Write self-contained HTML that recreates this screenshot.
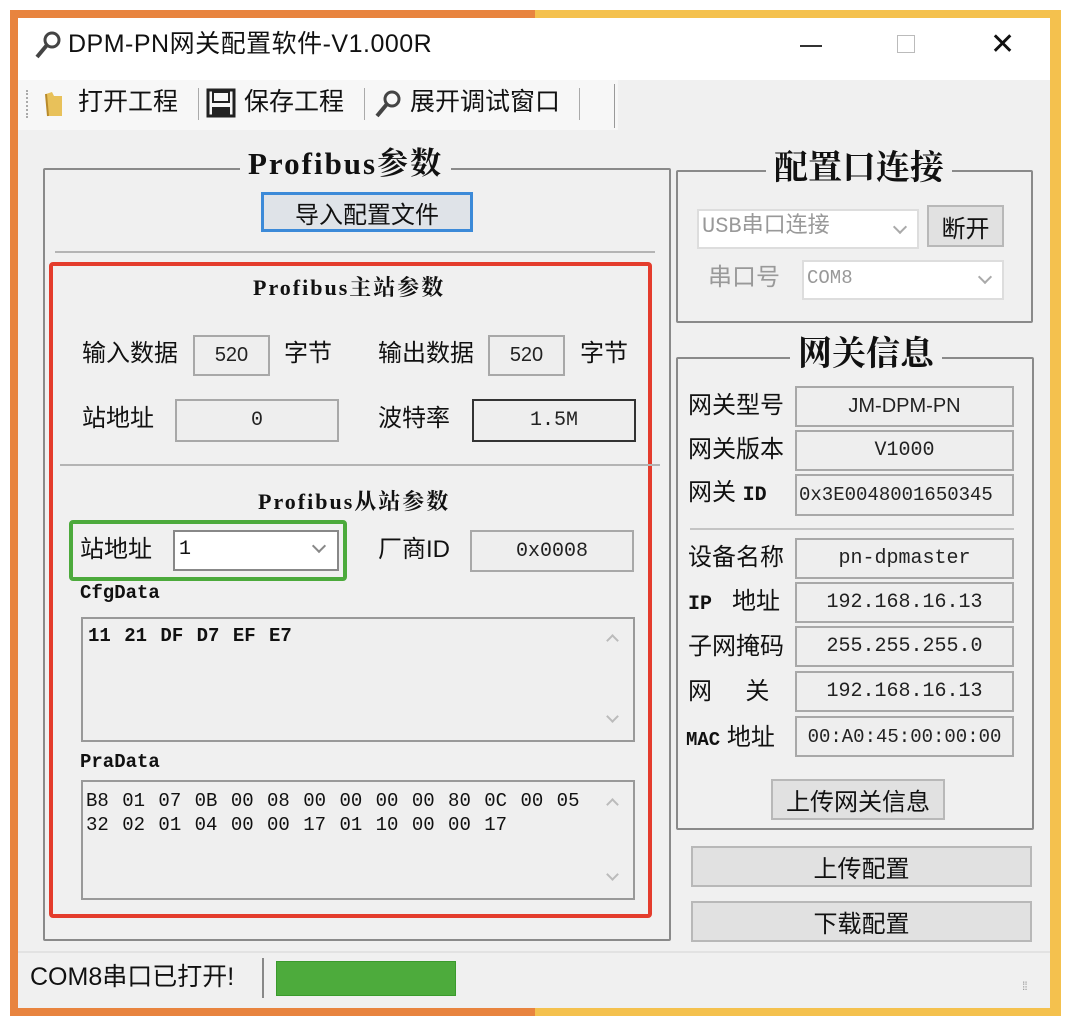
<!DOCTYPE html>
<html><head><meta charset="utf-8"><style>
*{margin:0;padding:0;box-sizing:border-box}
body{width:1069px;height:1035px;background:#fff;position:relative;overflow:hidden;font-family:"Liberation Sans","Noto Sans CJK SC",sans-serif;color:#111}
.a{position:absolute}
.t{position:absolute;white-space:nowrap;font-size:23px;line-height:1}
.box{position:absolute;border:2px solid #a8a8a8;background:#eeeeee;font-family:"Liberation Mono","Noto Sans CJK SC",monospace;font-size:20px;display:flex;align-items:center;justify-content:center;color:#222}
.grp{position:absolute;border:2px solid #8a8a8a;border-radius:2px}
.gt{position:absolute;background:#f0f0f0;font-weight:bold;white-space:nowrap;padding:0 8px;line-height:1;font-family:"Liberation Serif","Noto Serif CJK SC",serif}
.btn{position:absolute;border:2px solid #b8b8b8;background:#e1e1e1;display:flex;align-items:center;justify-content:center;font-size:23px}
.mono{font-family:"Liberation Mono","Noto Sans CJK SC",monospace}
.chev{position:absolute;width:10px;height:10px;border-right:2px solid #888;border-bottom:2px solid #888;transform:rotate(45deg)}
.chu{position:absolute;width:9px;height:9px;border-left:2px solid #bbb;border-top:2px solid #bbb;transform:rotate(45deg)}
.chd{position:absolute;width:9px;height:9px;border-right:2px solid #bbb;border-bottom:2px solid #bbb;transform:rotate(45deg)}
</style></head><body>
<div class="a" style="left:10px;top:10px;width:525px;height:1006px;background:#e8843f"></div>
<div class="a" style="left:535px;top:10px;width:526px;height:1006px;background:#f4c14e"></div>
<div class="a" style="left:18px;top:18px;width:1032px;height:990px;background:#f0f0f0"></div>
<div class="a" style="left:18px;top:18px;width:1032px;height:62px;background:#fff"></div>
<div class="a" style="left:18px;top:80px;width:600px;height:50px;background:#f7f7f7"></div>
<svg class="a" style="left:32px;top:30px" width="34" height="30" viewBox="0 0 34 30"><circle cx="20" cy="10" r="7" fill="none" stroke="#444" stroke-width="3"/><path d="M15 15 L5 27" stroke="#444" stroke-width="4"/></svg>
<div class="t" style="left:68px;top:32px;font-size:25px;letter-spacing:0.5px">DPM-PN网关配置软件-V1.000R</div>
<div class="a" style="left:800px;top:45px;width:22px;height:2px;background:#333"></div>
<div class="a" style="left:897px;top:35px;width:18px;height:18px;border:1px solid #bbb"></div>
<div class="t" style="left:990px;top:30px;font-size:30px;font-weight:300">✕</div>
<div class="a" style="left:26px;top:90px;width:2px;height:28px;border-left:2px dotted #aaa"></div>
<svg class="a" style="left:42px;top:88px" width="24" height="30"><path d="M4 6 L10 4 L12 8 L20 8 L20 28 L6 28 Z" fill="#e8c15a"/><path d="M4 6 L6 28" stroke="#b88a2a" stroke-width="2"/></svg>
<div class="t" style="left:78px;top:90px;font-size:25px">打开工程</div>
<div class="a" style="left:198px;top:88px;width:1px;height:32px;background:#aaa"></div>
<svg class="a" style="left:206px;top:88px" width="30" height="30"><rect x="2" y="2" width="26" height="26" fill="none" stroke="#222" stroke-width="3"/><rect x="7" y="4" width="16" height="10" fill="none" stroke="#222" stroke-width="2"/><rect x="6" y="19" width="18" height="8" fill="#222"/></svg>
<div class="t" style="left:244px;top:90px;font-size:25px">保存工程</div>
<div class="a" style="left:364px;top:88px;width:1px;height:32px;background:#aaa"></div>
<svg class="a" style="left:372px;top:88px" width="34" height="32" viewBox="0 0 34 30"><circle cx="20" cy="10" r="7" fill="none" stroke="#444" stroke-width="3"/><path d="M15 15 L5 27" stroke="#444" stroke-width="4"/></svg>
<div class="t" style="left:410px;top:90px;font-size:25px">展开调试窗口</div>
<div class="a" style="left:579px;top:88px;width:1px;height:32px;background:#aaa"></div>
<div class="a" style="left:614px;top:84px;width:1px;height:44px;background:#999"></div>

<div class="grp" style="left:43px;top:168px;width:628px;height:773px"></div>
<div class="gt" style="left:240px;top:148px;font-size:31px;letter-spacing:2px">Profibus参数</div>
<div class="btn" style="left:261px;top:192px;width:212px;height:40px;border:3px solid #3c8ad8;background:#dfe3e8;font-size:24px">导入配置文件</div>
<div class="a" style="left:55px;top:251px;width:600px;height:2px;background:#b4b4b4"></div>
<div class="a" style="left:49px;top:262px;width:603px;height:656px;border:4px solid #e43c2c;border-radius:4px"></div>
<div class="gt" style="left:245px;top:277px;font-size:22px;letter-spacing:2px;background:none">Profibus主站参数</div>
<div class="t" style="left:82px;top:342px;font-size:24px">输入数据</div>
<div class="box" style="left:193px;top:335px;width:77px;height:41px;font-family:'Liberation Sans',sans-serif">520</div>
<div class="t" style="left:284px;top:342px;font-size:24px">字节</div>
<div class="t" style="left:378px;top:342px;font-size:24px">输出数据</div>
<div class="box" style="left:488px;top:335px;width:77px;height:41px;font-family:'Liberation Sans',sans-serif">520</div>
<div class="t" style="left:580px;top:342px;font-size:24px">字节</div>
<div class="t" style="left:82px;top:407px;font-size:24px">站地址</div>
<div class="box" style="left:175px;top:399px;width:164px;height:43px">0</div>
<div class="t" style="left:378px;top:407px;font-size:24px">波特率</div>
<div class="box" style="left:472px;top:399px;width:164px;height:43px;border-color:#333">1.5M</div>
<div class="a" style="left:60px;top:464px;width:600px;height:2px;background:#b4b4b4"></div>
<div class="gt" style="left:250px;top:491px;font-size:22px;letter-spacing:2px;background:none">Profibus从站参数</div>
<div class="a" style="left:69px;top:520px;width:278px;height:61px;border:4px solid #4caa3c;border-radius:4px"></div>
<div class="t" style="left:80px;top:538px;font-size:24px">站地址</div>
<div class="a" style="left:173px;top:530px;width:166px;height:41px;border:2px solid #888;background:#fff"></div>
<div class="t mono" style="left:179px;top:540px;font-size:20px">1</div>
<div class="chev" style="left:314px;top:541px"></div>
<div class="t" style="left:378px;top:538px;font-size:24px">厂商ID</div>
<div class="box" style="left:470px;top:530px;width:164px;height:42px">0x0008</div>
<div class="t mono" style="left:80px;top:584px;font-size:19px;font-weight:bold">CfgData</div>
<div class="a" style="left:81px;top:617px;width:554px;height:125px;border:2px solid #999;background:#efefef"></div>
<div class="t mono" style="left:88px;top:627px;font-size:19px;font-weight:bold;word-spacing:2px">11 21 DF D7 EF E7</div>
<div class="chu" style="left:608px;top:636px"></div>
<div class="chd" style="left:608px;top:712px"></div>
<div class="t mono" style="left:80px;top:753px;font-size:19px;font-weight:bold">PraData</div>
<div class="a" style="left:81px;top:780px;width:554px;height:120px;border:2px solid #999;background:#efefef"></div>
<div class="a mono" style="left:86px;top:789px;font-size:19px;line-height:24px;white-space:pre;word-spacing:2px">B8 01 07 0B 00 08 00 00 00 00 80 0C 00 05
32 02 01 04 00 00 17 01 10 00 00 17</div>
<div class="chu" style="left:608px;top:800px"></div>
<div class="chd" style="left:608px;top:870px"></div>

<div class="grp" style="left:676px;top:170px;width:357px;height:153px"></div>
<div class="gt" style="left:766px;top:152px;font-size:34px">配置口连接</div>
<div class="a" style="left:697px;top:209px;width:222px;height:40px;border:2px solid #ddd;background:#fff"></div>
<div class="t mono" style="left:702px;top:216px;font-size:22px;color:#999">USB串口连接</div>
<div class="chev" style="left:895px;top:222px;border-color:#aaa"></div>
<div class="btn" style="left:927px;top:205px;width:77px;height:42px;font-size:24px">断开</div>
<div class="t" style="left:708px;top:266px;color:#999;font-size:24px">串口号</div>
<div class="a" style="left:802px;top:260px;width:202px;height:40px;border:2px solid #ddd;background:#fff"></div>
<div class="t mono" style="left:807px;top:269px;font-size:19px;color:#999">COM8</div>
<div class="chev" style="left:980px;top:272px;border-color:#aaa"></div>

<div class="grp" style="left:676px;top:357px;width:358px;height:473px"></div>
<div class="gt" style="left:790px;top:338px;font-size:34px">网关信息</div>
<div class="t" style="left:688px;top:394px;font-size:24px">网关型号</div>
<div class="box" style="left:795px;top:386px;width:219px;height:41px;font-family:'Liberation Sans',sans-serif">JM-DPM-PN</div>
<div class="t" style="left:688px;top:438px;font-size:24px">网关版本</div>
<div class="box" style="left:795px;top:430px;width:219px;height:41px">V1000</div>
<div class="t" style="left:688px;top:481px;font-size:24px">网关 <span class="mono" style="font-size:20px;font-weight:bold">ID</span></div>
<div class="box" style="left:795px;top:474px;width:219px;height:42px;font-size:19px;justify-content:flex-start;padding-left:2px">0x3E0048001650345</div>
<div class="a" style="left:690px;top:528px;width:324px;height:2px;background:#c4c4c4"></div>
<div class="t" style="left:688px;top:546px;font-size:24px">设备名称</div>
<div class="box" style="left:795px;top:538px;width:219px;height:41px">pn-dpmaster</div>
<div class="t" style="left:688px;top:590px;font-size:24px"><span class="mono" style="font-size:20px;font-weight:bold">IP</span>&nbsp;&nbsp; 地址</div>
<div class="box" style="left:795px;top:582px;width:219px;height:41px">192.168.16.13</div>
<div class="t" style="left:688px;top:635px;font-size:24px">子网掩码</div>
<div class="box" style="left:795px;top:626px;width:219px;height:41px">255.255.255.0</div>
<div class="t" style="left:688px;top:680px;font-size:24px">网&nbsp;&nbsp;&nbsp;&nbsp;&nbsp;关</div>
<div class="box" style="left:795px;top:671px;width:219px;height:41px">192.168.16.13</div>
<div class="t" style="left:686px;top:726px;font-size:24px"><span class="mono" style="font-size:19px;font-weight:bold">MAC</span> 地址</div>
<div class="box" style="left:795px;top:716px;width:219px;height:41px;font-size:19px">00:A0:45:00:00:00</div>
<div class="btn" style="left:771px;top:779px;width:174px;height:41px;font-size:24px">上传网关信息</div>
<div class="btn" style="left:691px;top:846px;width:341px;height:41px;font-size:24px">上传配置</div>
<div class="btn" style="left:691px;top:901px;width:341px;height:41px;font-size:24px">下载配置</div>

<div class="a" style="left:18px;top:951px;width:1032px;height:2px;background:#e2e2e2"></div>
<div class="t" style="left:30px;top:965px;font-size:25px">COM8串口已打开!</div>
<div class="a" style="left:262px;top:958px;width:2px;height:40px;background:#888"></div>
<div class="a" style="left:276px;top:961px;width:180px;height:35px;background:#4dab3c;border:1px solid #3a9a2c"></div>
<div class="t" style="left:1022px;top:980px;font-size:12px;color:#999;letter-spacing:-1px">⁞⁞</div>
</body></html>
